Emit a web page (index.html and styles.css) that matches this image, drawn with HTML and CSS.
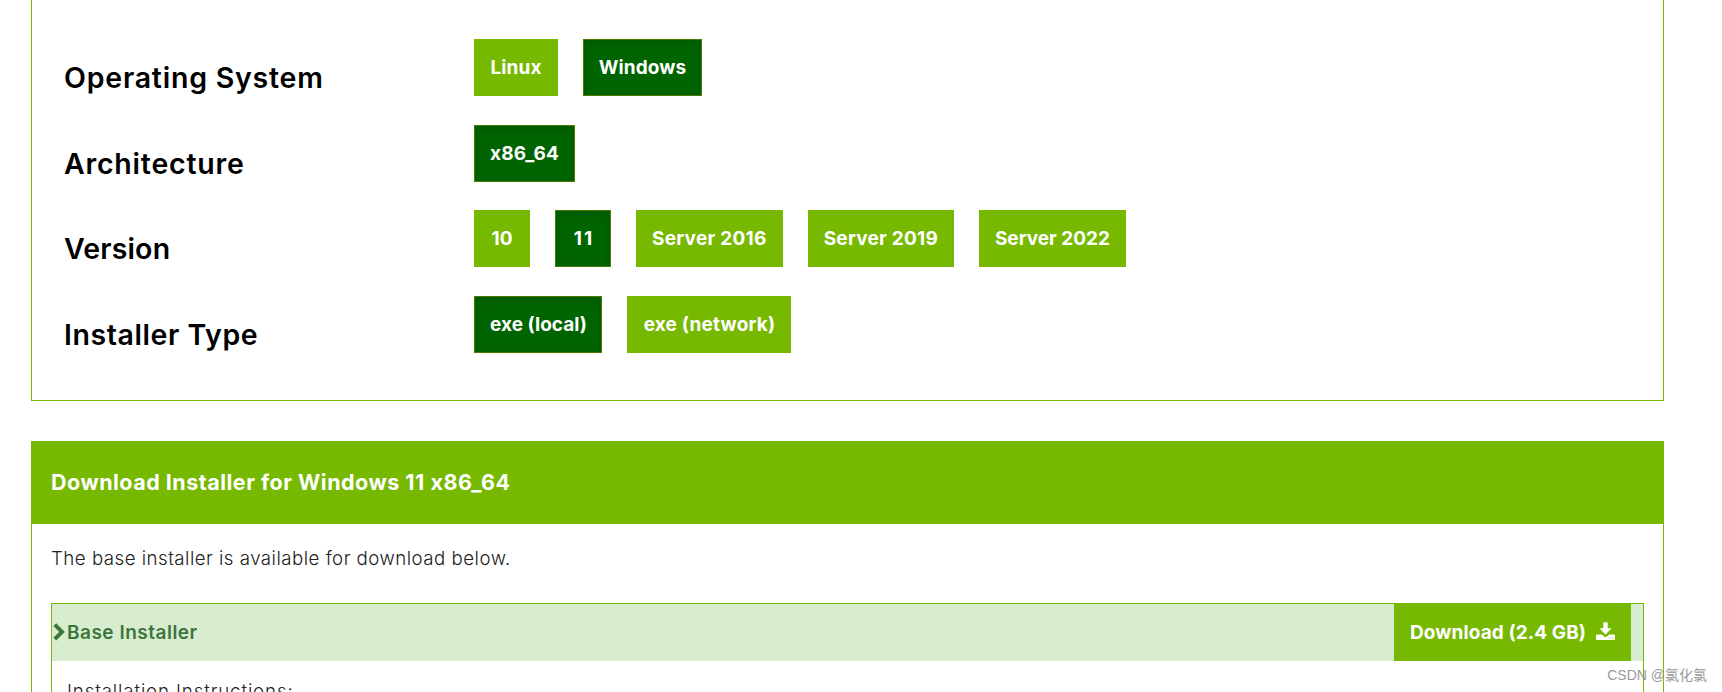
FILE: index.html
```
<!DOCTYPE html>
<html lang="en">
<head>
    <meta charset="UTF-8">
    <meta name="viewport" content="width=device-width, initial-scale=1.0">
    <title>Download Installer</title>
    <link rel="stylesheet" href="styles.css">
</head>
<body>

    <div class="selector">
        <div class="row">
            <h3 class="label-os">Operating System</h3>
            <div class="options">
                <button class="btn w-linux">Linux</button>
                <button class="btn active w-windows">Windows</button>
            </div>
        </div>
        <div class="row">
            <h3 class="label-arch">Architecture</h3>
            <div class="options">
                <button class="btn active w-arch">x86_64</button>
            </div>
        </div>
        <div class="row">
            <h3 class="label-version">Version</h3>
            <div class="options">
                <button class="btn w-num">10</button>
                <button class="btn active w-num w-eleven">11</button>
                <button class="btn w-server">Server 2016</button>
                <button class="btn w-server">Server 2019</button>
                <button class="btn w-server w-last">Server 2022</button>
            </div>
        </div>
        <div class="row">
            <h3 class="label-type">Installer Type</h3>
            <div class="options">
                <button class="btn active w-local">exe (local)</button>
                <button class="btn w-network">exe (network)</button>
            </div>
        </div>
    </div>

    <div class="download">
        <div class="download-title"><h4>Download Installer for Windows 11 x86_64</h4></div>
        <div class="download-body">
            <p class="intro">The base installer is available for download below.</p>
            <div class="installer">
                <div class="installer-header">
                    <svg class="chevron" viewBox="0 0 12 18"><path d="M1.8 1.700 9 8.900 1.800 16.100" fill="none" stroke="currentColor" stroke-width="4"/></svg>
                    <span class="installer-name">Base Installer</span>
                    <button class="btn btn-download">
                        <span>Download (2.4 GB)</span>
                        <svg class="icon" viewBox="0 0 19 18">
                            <path fill="currentColor" d="M1 12.500h4.800l2.400 2q1.300 1 2.600 0l2.400-2H18q1 0 1 1V17q0 1-1 1H1q-1 0-1-1v-3.500q0-1 1-1z"/>
                            <path fill="currentColor" stroke="#76b900" stroke-width="0.6" d="M7 0h5v6h4l-6.500 7L3 6h4z"/>
                            <path fill="#76b900" d="M13.500 15.500h1v1h-1zM16.200 15.500h1v1h-1z"/>
                        </svg>
                    </button>
                </div>
                <p class="instructions">Installation Instructions:</p>
            </div>
        </div>
    </div>

    <div class="watermark">CSDN @氯化氯</div>

</body>
</html>
```

FILE: styles.css
```
* {
    margin: 0;
    padding: 0;
    box-sizing: border-box;
}

html {
    overflow: hidden;
}

body {
    width: 1722px;
    height: 692px;
    padding: 0 58px 0 31px;
    overflow: hidden;
    background: #fff;
    color: #222;
    font-family: Inter, "Liberation Sans", sans-serif;
    font-feature-settings: "calt" 0;
}

.selector {
    height: 401px;
    padding: 39px 32px 0;
    border: 1px solid #76b900;
    border-top: none;
}

.row {
    display: flex;
    height: 85.67px;
}

.row h3 {
    width: 410px;
    padding-top: 22px;
    color: #000;
    font-size: 28.5px;
    font-weight: 600;
    line-height: 34px;
}

.row .label-os,
.row .label-arch { letter-spacing: 0.78px; }
.row .label-version { letter-spacing: 0.15px; }
.row .label-type { letter-spacing: 0.57px; }

.options {
    display: flex;
    gap: 25px;
}

.btn {
    height: 57px;
    border: 1px solid #76b900;
    background: #76b900;
    color: #fff;
    font-family: inherit;
    font-feature-settings: inherit;
    font-size: 19px;
    font-weight: 700;
    line-height: 24px;
    letter-spacing: 0.1px;
    white-space: nowrap;
}

.btn.active {
    border-color: #4a7c00;
    background: #006400;
    box-shadow: inset 0 3px 8px rgba(0, 0, 0, 0.125);
}

.w-linux { width: 84px; }
.w-windows { width: 119px; }
.w-arch { width: 101px; padding-top: 1px; }
.w-num { width: 56px; }
.w-eleven { padding-left: 2px; letter-spacing: 2px; }
.w-server { width: 146.6px; letter-spacing: 0.25px; }
.w-last { letter-spacing: 0; }
.w-local { width: 128px; padding-top: 1px; padding-left: 1px; letter-spacing: 0; }
.w-network { width: 164px; padding-top: 1px; padding-left: 1px; letter-spacing: 0.2px; }

.download {
    height: 251px;
    margin-top: 40px;
    border: 1px solid #76b900;
    border-bottom: none;
    overflow: hidden;
}

.download-title {
    height: 82px;
    padding: 26px 19px;
    background: #76b900;
    color: #fff;
}

.download-title h4 {
    font-size: 21.5px;
    font-weight: 700;
    line-height: 28px;
    letter-spacing: 0.49px;
}

.download-body {
    padding: 21px 19px 0;
}

.intro {
    height: 58px;
    font-size: 18.7px;
    font-weight: 300;
    line-height: 28px;
    letter-spacing: 0.48px;
}

.installer {
    height: 89px;
    border: 1px solid #76b900;
    border-bottom: none;
}

.installer-header {
    display: flex;
    align-items: center;
    height: 57px;
    padding-right: 12px;
    background: #d8ecd0;
    color: #3c763d;
}

.chevron {
    width: 12px;
    height: 18px;
    margin-left: 1px;
    margin-bottom: 2px;
}

.installer-name {
    margin-left: 2px;
    font-size: 19px;
    font-weight: 600;
    letter-spacing: 0.5px;
}

.btn-download {
    display: flex;
    align-items: center;
    justify-content: space-between;
    width: 237px;
    margin-left: auto;
    padding: 0 15px;
    letter-spacing: 0.1px;
}

.icon {
    width: 19px;
    height: 18px;
    margin-bottom: 3px;
}

.instructions {
    padding: 17px 15px 0;
    font-size: 18.7px;
    font-weight: 300;
    line-height: 28px;
    letter-spacing: 0.87px;
}

.watermark {
    position: absolute;
    right: 15px;
    bottom: 7px;
    color: #999;
    font-family: "Liberation Sans", "Noto Sans CJK SC", sans-serif;
    font-size: 14px;
    line-height: 20px;
}
```
